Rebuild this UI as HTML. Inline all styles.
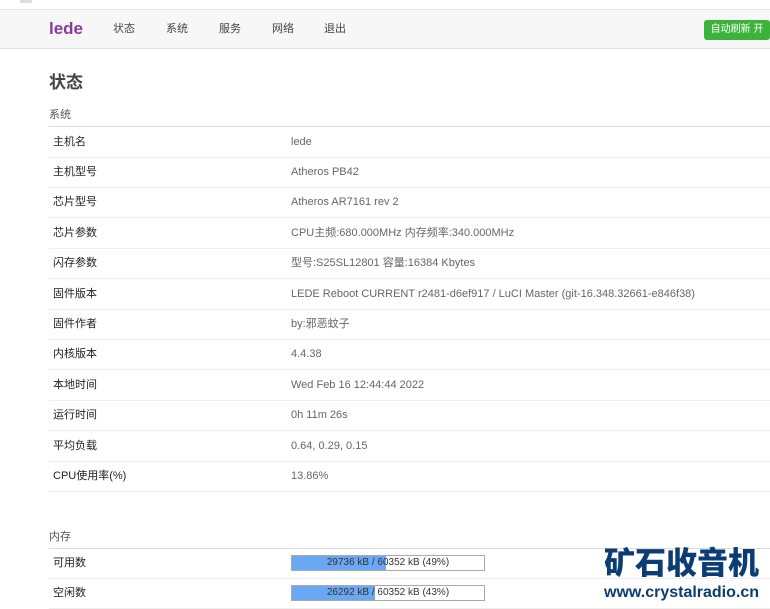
<!DOCTYPE html>
<html><head><meta charset="utf-8"><style>
*{margin:0;padding:0;box-sizing:border-box}
body{width:770px;height:606px;overflow:hidden;background:#fff;font-family:"Liberation Sans","Noto Sans CJK SC",sans-serif;position:relative;color:#333}
.top{position:absolute;left:0;top:0;width:770px;height:10px;background:#fff;border-bottom:1px solid #e6e6e6}
.top i{position:absolute;left:20px;top:0;width:12px;height:3px;background:#ddd}
.hdr{position:absolute;left:0;top:10px;width:770px;height:39px;background:#f7f7f7;border-bottom:1px solid #e3e3e3}
.logo{position:absolute;left:49px;top:0;line-height:38px;font-size:17px;color:#8a3a9e;font-weight:bold}
.nav{position:absolute;top:0;line-height:38px;font-size:11px;color:#444}
.btn{position:absolute;left:704px;top:10px;width:66px;height:20px;background:#3bb33b;border-radius:3px;color:#fff;font-size:10px;line-height:20px;text-align:center}
h1{position:absolute;left:49px;top:68px;font-size:17px;font-weight:bold;color:#444}
.sec{position:absolute;left:49px;font-size:11px;color:#555}
.line{position:absolute;left:49px;width:721px;height:1px;background:#ddd}
.row{position:absolute;left:49px;width:721px;height:31px;border-bottom:1px solid #eee;font-size:11px;line-height:30px}
.row .l{position:absolute;left:4px;top:0;color:#222}
.row .v{position:absolute;left:242px;top:0;color:#666}
.bar{position:absolute;left:242px;top:7px;width:194px;height:16px;border:1px solid #aaa;background:#fff;font-size:10px;color:#333;text-align:center;line-height:14px}
.bar b{position:absolute;left:0;top:0;height:14px;background:#6aa8f4}
.bar span{position:relative}
.wm{position:absolute;left:604px;top:541px;font-size:31px;font-weight:900;color:#0b3c74;letter-spacing:0;white-space:nowrap;font-family:"Noto Sans CJK SC",sans-serif;line-height:40px}
.url{position:absolute;left:604px;top:584px;font-size:16px;font-weight:bold;color:#0b3c74;white-space:nowrap;line-height:18px}
</style></head><body>
<div class="top"><i></i></div>
<div class="hdr">
<div class="logo">lede</div>
<div class="nav" style="left:113px">状态</div>
<div class="nav" style="left:166px">系统</div>
<div class="nav" style="left:219px">服务</div>
<div class="nav" style="left:272px">网络</div>
<div class="nav" style="left:324px">退出</div>
<div class="btn">自动刷新 开</div>
</div>
<h1>状态</h1>
<div class="sec" style="top:106px">系统</div>
<div class="line" style="top:126px"></div>
<div class="row" style="top:127px"><span class="l">主机名</span><span class="v">lede</span></div>
<div class="row" style="top:157px"><span class="l">主机型号</span><span class="v">Atheros PB42</span></div>
<div class="row" style="top:187px"><span class="l">芯片型号</span><span class="v">Atheros AR7161 rev 2</span></div>
<div class="row" style="top:218px"><span class="l">芯片参数</span><span class="v">CPU主频:680.000MHz 内存频率:340.000MHz</span></div>
<div class="row" style="top:248px"><span class="l">闪存参数</span><span class="v">型号:S25SL12801 容量:16384 Kbytes</span></div>
<div class="row" style="top:279px"><span class="l">固件版本</span><span class="v">LEDE Reboot CURRENT r2481-d6ef917 / LuCI Master (git-16.348.32661-e846f38)</span></div>
<div class="row" style="top:309px"><span class="l">固件作者</span><span class="v">by:邪恶蚊子</span></div>
<div class="row" style="top:339px"><span class="l">内核版本</span><span class="v">4.4.38</span></div>
<div class="row" style="top:370px"><span class="l">本地时间</span><span class="v">Wed Feb 16 12:44:44 2022</span></div>
<div class="row" style="top:400px"><span class="l">运行时间</span><span class="v">0h 11m 26s</span></div>
<div class="row" style="top:431px"><span class="l">平均负载</span><span class="v">0.64, 0.29, 0.15</span></div>
<div class="row" style="top:461px"><span class="l">CPU使用率(%)</span><span class="v">13.86%</span></div>
<div class="sec" style="top:528px">内存</div>
<div class="line" style="top:548px"></div>
<div class="row" style="top:548px"><span class="l">可用数</span><div class="bar"><b style="width:49%"></b><span>29736 kB / 60352 kB (49%)</span></div></div>
<div class="row" style="top:578px"><span class="l">空闲数</span><div class="bar"><b style="width:43%"></b><span>26292 kB / 60352 kB (43%)</span></div></div>
<div class="wm">矿石收音机</div>
<div class="url">www.crystalradio.cn</div>
</body></html>
